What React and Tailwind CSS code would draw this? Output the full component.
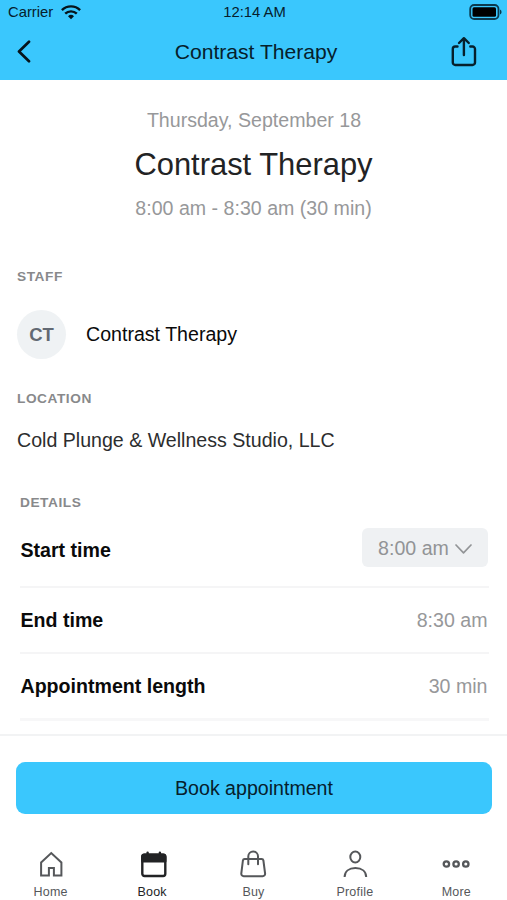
const iconProps = {
  className: "overflow-visible",
  width: 28,
  height: 30,
  viewBox: "0 0 28 30",
  fill: "none",
  stroke: "currentColor",
  strokeWidth: 2,
  strokeLinecap: "round",
  strokeLinejoin: "round",
};

function HomeIcon() {
  return (
    <svg {...iconProps} strokeLinejoin="miter">
      <path d="M4.100 14.500 14.250 5l10.150 9.500V27.400H16.900V20H11.900V27.400H4.100Z" />
    </svg>
  );
}

function BookIcon() {
  return (
    <svg {...iconProps} strokeWidth="2.400">
      <path d="M9.600 4.600V8M21.900 4.600V8" />
      <rect x="4.300" y="6.600" width="23" height="21.400" rx="2.200" />
      <path d="M4.300 9q0-2.400 2.200-2.400h18.600q2.200 0 2.200 2.400v4.300h-23Z" fill="currentColor" />
    </svg>
  );
}

function BuyIcon() {
  return (
    <svg {...iconProps}>
      <path d="M5.700 11h16.900a1.800 1.800 0 0 1 1.800 1.500l1.700 13a2.400 2.400 0 0 1-2.400 2.700H4.700a2.400 2.400 0 0 1-2.400-2.700l1.600-13A1.800 1.800 0 0 1 5.700 11Z" />
      <path d="M9.300 16.200V8.300a4.850 4.850 0 0 1 9.700 0v7.900" />
    </svg>
  );
}

function ProfileIcon() {
  return (
    <svg {...iconProps} strokeLinecap="butt">
      <ellipse cx="14.300" cy="9" rx="5" ry="5.500" />
      <path d="M3.600 29c0-5.700 4.400-8.900 10.800-8.900s10.800 3.200 10.800 8.900" />
    </svg>
  );
}

function MoreIcon() {
  return (
    <svg {...iconProps} strokeWidth="2.300">
      <circle cx="4.400" cy="16" r="2.700" />
      <circle cx="14.100" cy="16" r="2.700" />
      <circle cx="23.800" cy="16" r="2.700" />
    </svg>
  );
}

const tabs = [
  { label: "Home", Icon: HomeIcon },
  { label: "Book", Icon: BookIcon, active: true },
  { label: "Buy", Icon: BuyIcon },
  { label: "Profile", Icon: ProfileIcon },
  { label: "More", Icon: MoreIcon },
];

function SectionLabel({ children }) {
  return (
    <h2 className="text-[13.7px] leading-5 font-bold tracking-[0.55px] text-[#88898b]">{children}</h2>
  );
}

export default function App() {
  return (
    <div className="flex h-[900px] w-[507px] flex-col overflow-hidden bg-white font-['Liberation_Sans',Arial,sans-serif] text-[19.6px] text-[#0a0a0a]">
      <header className="h-20 shrink-0 bg-[#3ac7fd] text-[#06202c]">
        <div className="grid h-6 grid-cols-3 items-center pr-[5px] pl-2 text-[14.8px] leading-6">
          <div className="flex items-center gap-2">
            <span>Carrier</span>
            <svg width="20" height="15" viewBox="0 0 20 15" fill="none" stroke="#06141b" strokeWidth="2.4">
              <path d="M.9 5.100a13 13 0 0 1 18.200 0M4.200 8.700a8.300 8.300 0 0 1 11.600 0" />
              <path d="m10 14.300-3-3a4.300 4.300 0 0 1 6 0Z" fill="#06141b" stroke="none" />
            </svg>
          </div>
          <span className="pr-px text-center">12:14 AM</span>
          <svg className="justify-self-end" width="33" height="16" viewBox="0 0 33 16">
            <rect x="1.200" y="1" width="28.300" height="14" rx="4" fill="none" stroke="#0b3a4e" strokeWidth="1.800" />
            <rect x="3.500" y="3.300" width="23.500" height="9.400" rx="1.500" fill="#000" />
            <path d="M31 5.500q1.600.800 1.600 2.500T31 10.500Z" fill="#0b3a4e" />
          </svg>
        </div>
        <div className="grid h-14 grid-cols-[80px_1fr_80px] items-center">
          <svg className="ml-4" width="16" height="24" viewBox="0 0 16 24" fill="none" stroke="#06141b" strokeWidth="2.700" strokeLinecap="round" strokeLinejoin="round">
            <path d="M13 1.800 3 11.500l10 9.700" />
          </svg>
          <h1 className="pl-[5px] text-center text-[21.1px] leading-14">Contrast Therapy</h1>
          <svg className="ml-[22px]" width="30" height="32" viewBox="0 0 30 32" fill="none" stroke="#06202c" strokeWidth="2.400" strokeLinecap="round" strokeLinejoin="round">
            <path d="M8.500 10.500H6.300A2.500 2.500 0 0 0 3.800 13v13.500a2.500 2.500 0 0 0 2.500 2.500h17.200a2.500 2.500 0 0 0 2.500-2.500V13a2.500 2.500 0 0 0-2.500-2.500H21.300M14.900 19V2.500M10 7l4.900-4.800L19.800 7" />
          </svg>
        </div>
      </header>

      <main className="h-[656px] shrink-0 overflow-hidden border-b-2 border-[#f2f3f4] pt-[26px]">
        <section className="text-center text-[#97989a]">
          <p className="pl-px leading-7">Thursday, September 18</p>
          <h2 className="mt-[11px] text-[30.9px] leading-10 text-[#222324]">Contrast Therapy</h2>
          <p className="mt-[9px] leading-7">8:00 am - 8:30 am (30 min)</p>
        </section>
        <section className="mt-[45px] pl-[17px]">
          <SectionLabel>STAFF</SectionLabel>
          <div className="mt-[23px] flex items-center gap-5">
            <div className="flex size-[49px] items-center justify-center rounded-full bg-[#eff2f4] text-[18.5px] font-bold text-[#626973]">CT</div>
            <span>Contrast Therapy</span>
          </div>
        </section>
        <section className="mt-[30px] pl-[17px]">
          <SectionLabel>LOCATION</SectionLabel>
          <p className="mt-[17px] leading-7 text-[#2c2d2e]">Cold Plunge &amp; Wellness Studio, LLC</p>
        </section>
        <section className="mt-[39px] pr-[18px] pl-5">
          <SectionLabel>DETAILS</SectionLabel>
          <div className="flex h-[75px] items-center justify-between border-b-2 border-[#f5f5f6]">
            <span className="pt-[2px] pl-[0.5px] font-bold">Start time</span>
            <button className="mr-[1px] mb-[4px] flex h-[39px] w-[126px] items-center justify-center gap-[6px] rounded-md bg-[#eff1f3] text-[#929496]">
              <span className="pt-[2px]">8:00 am</span>
              <svg className="mt-[3px]" width="17" height="10" viewBox="0 0 17 10" fill="none" stroke="currentColor" strokeWidth="1.700" strokeLinecap="round" strokeLinejoin="round">
                <path d="m1 1 7.500 7.800L16 1" />
              </svg>
            </button>
          </div>
          <div className="flex h-[66px] items-center justify-between border-b-2 border-[#f5f5f6] pt-[2px] pr-[1.500px] pl-[0.5px]">
            <span className="font-bold">End time</span>
            <span className="text-[#97989a]">8:30 am</span>
          </div>
          <div className="flex h-[67px] items-center justify-between border-b-[3px] border-[#f7f7f8] pt-[2px] pr-[1.500px] pl-[0.5px]">
            <span className="font-bold">Appointment length</span>
            <span className="text-[#97989a]">30 min</span>
          </div>
        </section>
      </main>

      <div className="shrink-0 px-4 pt-[26px]">
        <button className="h-[52px] w-[476px] rounded-[9px] bg-[#3ac7fd] pt-[2px] text-[#06202c]">Book appointment</button>
      </div>
      <nav className="mt-[34px] grid shrink-0 grid-cols-5">
        {tabs.map(({ label, Icon, active }) => (
          <a key={label} className={active ? "flex flex-col items-center text-[#222325]" : "flex flex-col items-center text-[#55575a]"}>
            <Icon />
            <span className="mt-1 text-[12.5px] leading-5 tracking-[0.2px]">{label}</span>
          </a>
        ))}
      </nav>
    </div>
  );
}
